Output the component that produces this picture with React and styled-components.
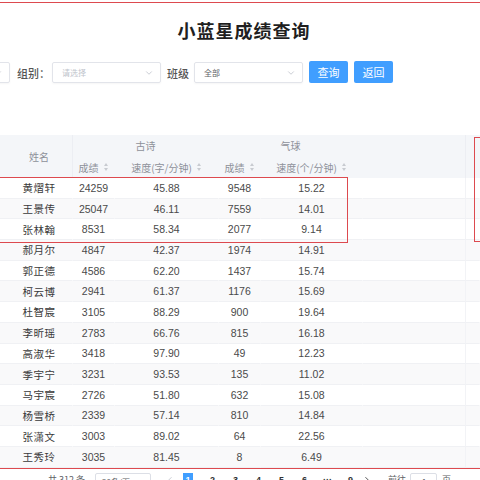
import React from 'react';
import styled, { createGlobalStyle } from 'styled-components';
import { ChevronDown, ChevronLeft, ChevronRight } from 'lucide-react';

const GlobalStyle = createGlobalStyle`
  html, body { margin: 0; padding: 0; background: #fff; }
  body {
    font-family: "Liberation Sans", "Noto Sans CJK SC", sans-serif;
    color: #606266;
  }
`;

const CJK = `"Noto Sans CJK SC", "Liberation Sans", sans-serif`;

const Page = styled.div`
  position: relative;
  width: 480px;
  height: 480px;
  overflow: hidden;
  display: flex;
  flex-direction: column;
`;

const Title = styled.h1`
  margin: 18px 0 0;
  height: 24px;
  line-height: 24px;
  text-align: center;
  font-family: ${CJK};
  font-size: 18px;
  font-weight: 700;
  letter-spacing: 1px;
  color: #1f1f1f;
  padding-left: 8px;
`;

const FilterBar = styled.div`
  display: flex;
  align-items: center;
  margin: 20px 0 0 -99px;
  height: 22px;
`;

const Label = styled.span`
  font-family: ${CJK};
  font-size: 11px;
  font-weight: 500;
  color: #555;
  margin: 0 ${p => p.$gap ?? 6}px 0 ${p => p.$lead ?? 6}px;
  white-space: nowrap;
`;

const Select = styled.div`
  width: 109px;
  height: 21px;
  box-sizing: border-box;
  border: 1px solid #e2e4ea;
  border-radius: 2px;
  display: flex;
  align-items: center;
  justify-content: space-between;
  padding: 0 6px 0 9px;
  font-family: ${CJK};
  font-size: 8px;
  color: ${p => (p.$placeholder ? '#c0c4cc' : '#606266')};
  box-shadow: 0 1px 2px rgba(0, 0, 0, 0.04);
`;

const Button = styled.button`
  width: 39px;
  height: 22px;
  margin-left: 6px;
  border: none;
  border-radius: 2px;
  background: #409eff;
  color: #fff;
  font-family: ${CJK};
  font-size: 11px;
  padding: 0;
  margin-top: -2px;
`;

const Table = styled.div`
  margin-top: 52px;
  display: grid;
  grid-template-columns: 73px 42px 104px 42px 102px 103px 1fr;
  grid-template-rows: 21.5px 21.5px;
  grid-auto-rows: 20.7px;
`;

const HeadCell = styled.div`
  background: #f4f6f9;
  grid-column: ${p => p.$col};
  grid-row: ${p => p.$row};
  display: flex;
  align-items: center;
  justify-content: center;
  font-family: ${CJK};
  font-size: 10px;
  color: #8e9199;
  border-right: 1px solid ${p => (p.$line ? '#eceef3' : 'transparent')};
  box-sizing: border-box;
  padding-left: ${p => p.$pad || 0}px;
  white-space: nowrap;
`;

const Sort = styled.span`
  position: relative;
  display: inline-block;
  width: 6px;
  height: 8px;
  margin-left: 4px;
  &::before, &::after {
    content: '';
    position: absolute;
    left: 1px;
    border-left: 2px solid transparent;
    border-right: 2px solid transparent;
  }
  &::before { top: 0; border-bottom: 3px solid #c8cbd1; }
  &::after { bottom: 0; border-top: 3px solid #c8cbd1; }
`;

const Cell = styled.div`
  display: flex;
  align-items: center;
  justify-content: center;
  background: ${p => (p.$stripe ? '#f9f9fa' : '#fff')};
  border-bottom: 1px solid #f0f1f4;
  box-sizing: border-box;
  font-size: 10.5px;
  color: #4a4a4a;
  padding-left: ${p => p.$pad || 0}px;
  border-right: 1px solid ${p => (p.$line ? '#f2f3f6' : 'transparent')};
`;

const Name = styled.span`
  font-family: ${CJK};
  font-size: 10.5px;
  letter-spacing: 0.5px;
  color: #3a3a3a;
`;

const Pager = styled.div`
  display: flex;
  align-items: flex-start;
  margin-top: 5px;
  padding-left: 48px;
  font-size: 9px;
  color: #606266;
  height: 24px;
`;

const PagerText = styled.span`
  font-family: ${CJK};
  margin-right: ${p => p.$mr || 0}px;
  line-height: 14px;
`;

const PagerBox = styled.div`
  width: ${p => p.$w}px;
  height: 18px;
  box-sizing: border-box;
  border: 1px solid #dcdfe6;
  border-radius: 2px;
  font-size: 8px;
  display: flex;
  align-items: flex-start;
  padding: 2px 0 0 ${p => p.$pl || 6}px;
  margin-right: ${p => p.$mr || 0}px;
  font-family: ${CJK};
`;

const PageNum = styled.span`
  width: ${p => (p.$active ? 10 : 23)}px;
  height: 18px;
  display: flex;
  justify-content: center;
  padding-top: 2px;
  box-sizing: border-box;
  background: ${p => (p.$active ? '#409eff' : 'transparent')};
  color: ${p => (p.$active ? '#fff' : '#303133')};
  font-weight: 700;
  margin: 0 ${p => (p.$active ? 8 : 0)}px;
`;

const Mark = styled.div`
  position: absolute;
  border: 1.5px solid #dd4a4f;
  pointer-events: none;
`;

const rows = [
  ['黄熠轩', '24259', '45.88', '9548', '15.22'],
  ['王景传', '25047', '46.11', '7559', '14.01'],
  ['张林翰', '8531', '58.34', '2077', '9.14'],
  ['郝月尔', '4847', '42.37', '1974', '14.91'],
  ['郭正德', '4586', '62.20', '1437', '15.74'],
  ['柯云博', '2941', '61.37', '1176', '15.69'],
  ['杜智宸', '3105', '88.29', '900', '19.64'],
  ['李昕瑶', '2783', '66.76', '815', '16.18'],
  ['高淑华', '3418', '97.90', '49', '12.23'],
  ['季宇宁', '3231', '93.53', '135', '11.02'],
  ['马宇宸', '2726', '51.80', '632', '15.08'],
  ['杨雪桥', '2339', '57.14', '810', '14.84'],
  ['张潇文', '3003', '89.02', '64', '22.56'],
  ['王秀玲', '3035', '81.45', '8', '6.49'],
];

export default function App() {
  return (
    <Page>
      <GlobalStyle />
      <Title>小蓝星成绩查询</Title>

      <FilterBar>
        <Select $placeholder>
          <span />
          <ChevronDown size={10} color="#c0c4cc" />
        </Select>
        <Label $lead={7} $gap={2}>组别：</Label>
        <Select $placeholder>
          <span>请选择</span>
          <ChevronDown size={10} color="#c0c4cc" />
        </Select>
        <Label $lead={6} $gap={5}>班级</Label>
        <Select>
          <span>全部</span>
          <ChevronDown size={10} color="#c0c4cc" />
        </Select>
        <Button>查询</Button>
        <Button>返回</Button>
      </FilterBar>

      <Table>
        <HeadCell $col="1" $row="1 / 3" $line $pad={6}>姓名</HeadCell>
        <HeadCell $col="2 / 4" $row="1">古诗</HeadCell>
        <HeadCell $col="4 / 6" $row="1">气球</HeadCell>
        <HeadCell $col="6" $row="1 / 3" $line />
        <HeadCell $col="7" $row="1 / 3" />
        <HeadCell $col="2" $row="2">成绩<Sort /></HeadCell>
        <HeadCell $col="3" $row="2">速度(字/分钟)<Sort /></HeadCell>
        <HeadCell $col="4" $row="2">成绩<Sort /></HeadCell>
        <HeadCell $col="5" $row="2">速度(个/分钟)<Sort /></HeadCell>

        {rows.map((r, i) => {
          const stripe = i % 2 === 1;
          return (
            <React.Fragment key={r[0]}>
              <Cell $stripe={stripe} $pad={6}><Name>{r[0]}</Name></Cell>
              <Cell $stripe={stripe}>{r[1]}</Cell>
              <Cell $stripe={stripe}>{r[2]}</Cell>
              <Cell $stripe={stripe}>{r[3]}</Cell>
              <Cell $stripe={stripe}>{r[4]}</Cell>
              <Cell $stripe={stripe} $line />
              <Cell $stripe={stripe} />
            </React.Fragment>
          );
        })}
      </Table>

      <Pager>
        <PagerText $mr={10}>共 312 条</PagerText>
        <PagerBox $w={56} $mr={14}>20条/页</PagerBox>
        <ChevronLeft size={10} color="#c0c4cc" style={{ marginTop: 2 }} />
        <PageNum $active>1</PageNum>
        {['2', '3', '4', '5', '6', '···', '9'].map(n => (
          <PageNum key={n}>{n}</PageNum>
        ))}
        <ChevronRight size={10} color="#303133" style={{ marginTop: 2, marginRight: 16 }} />
        <PagerText $mr={4}>前往</PagerText>
        <PagerBox $w={27} $pl={11} $mr={5}>1</PagerBox>
        <PagerText>页</PagerText>
      </Pager>

      <Mark style={{ left: -4, right: -4, top: 2, height: 0, borderBottom: 'none' }} />
      <Mark style={{ left: -4, top: 177, width: 350, height: 64 }} />
      <Mark style={{ left: 474, top: 137, width: 40, height: 103 }} />
      <Mark style={{ left: -4, right: -4, top: 468, height: 0, borderBottom: 'none' }} />
    </Page>
  );
}
